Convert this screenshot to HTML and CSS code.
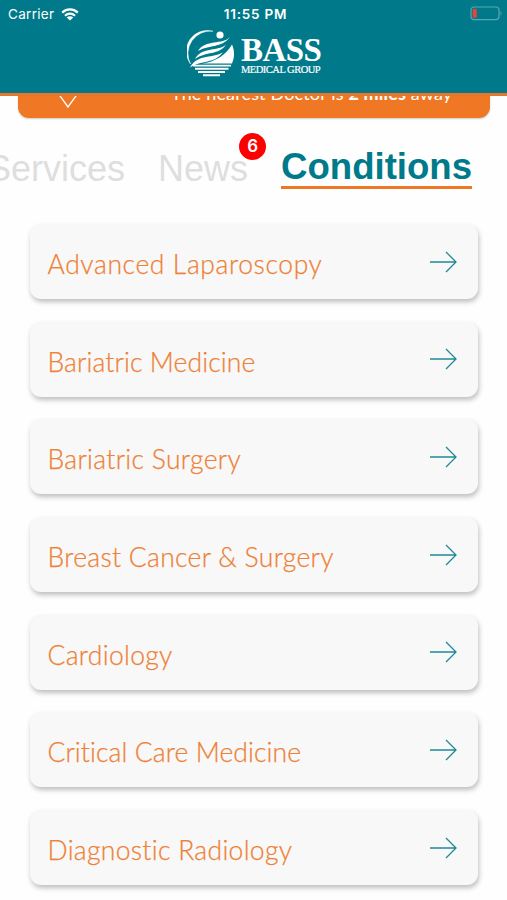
FILE: index.html
```html
<!DOCTYPE html>
<html lang="en">
<head>
  <meta charset="UTF-8">
  <meta name="viewport" content="width=device-width, initial-scale=1.0">
  <title>BASS Medical Group</title>
  <link rel="stylesheet" href="styles.css">
</head>
<body>

  <!-- Header -->
  <header class="header">
    <div class="status">
      <div class="carrier">
        <span>Carrier</span>
        <svg class="wifi" viewBox="0 0 18 13">
          <path d="M1.2 4.6a11.2 11.2 0 0 1 15.6 0M4 7.7a7.2 7.2 0 0 1 10 0" fill="none" stroke="#fff" stroke-width="2.2"/>
          <path d="M9 12.6l-3.2-3a4.6 4.6 0 0 1 6.4 0z" fill="#fff"/>
        </svg>
      </div>
      <span class="time">11:55 PM</span>
      <svg class="battery" viewBox="0 0 33 15">
        <rect x="1" y="1" width="28" height="12.6" rx="3" fill="none" stroke="#5aa5b0" stroke-width="1.2"/>
        <rect x="2.8" y="2.8" width="4" height="9" rx="1.5" fill="#ee4035"/>
        <path d="M30.5 5.2q2.2 2.1 0 4.2z" fill="#5aa5b0"/>
      </svg>
    </div>
    <div class="logo">
      <svg class="emblem" viewBox="0 0 48 48">
        <path d="M26 1.2A22.500 22.500 0 0 0 3.500 34A21 21 0 0 1 26 1.200z" fill="#fff" stroke="#fff" stroke-width="0.500"/>
        <circle cx="33" cy="5" r="3.600" fill="#fff"/>
        <path d="M43 7C36 15 18 9 11 21C22 14.500 34 18.500 43 7z" fill="#fff"/>
        <path d="M39 14.500C32 22 15 16 8 29C19 21 32 25.500 39 14.500z" fill="#fff"/>
        <path d="M36 22C27 29 11 23 3 37.500C14 30 28 34 36 22z" fill="#fff"/>
        <path d="M45 14.500C48 21 47.500 28 45 33.500H15C28 32 39 25 45 14.500z" fill="#fff"/>
        <path d="M6 35.600H44M8 38.800H41.500M11 42H38M16 45.200H33" stroke="#fff" stroke-width="1.900"/>
      </svg>
      <div class="brand">
        <span class="brand-name">BASS</span>
        <span class="brand-sub">MEDICAL GROUP</span>
      </div>
    </div>
  </header>

  <!-- Nearest doctor, scrolled under the header -->
  <div class="banner">
    <svg class="pin" viewBox="0 0 20 26">
      <path d="M10 25L2 14a9 9 0 1 1 16 0z" fill="none" stroke="#fff" stroke-width="1.300"/>
    </svg>
    <p>The nearest Doctor is <b>2 miles</b> away</p>
  </div>

  <nav class="tabs">
    <a class="tab services">Services</a>
    <a class="tab news">News<span class="badge">6</span></a>
    <a class="tab active">Conditions</a>
  </nav>

  <main class="list">
    <a class="card wide"><span>Advanced Laparoscopy</span><svg class="arrow" viewBox="0 0 27 22"><path d="M0 11H26M16 1L26 11L16 21"/></svg></a>
    <a class="card tight"><span>Bariatric Medicine</span><svg class="arrow" viewBox="0 0 27 22"><path d="M0 11H26M16 1L26 11L16 21"/></svg></a>
    <a class="card"><span>Bariatric Surgery</span><svg class="arrow" viewBox="0 0 27 22"><path d="M0 11H26M16 1L26 11L16 21"/></svg></a>
    <a class="card"><span>Breast Cancer &amp; Surgery</span><svg class="arrow" viewBox="0 0 27 22"><path d="M0 11H26M16 1L26 11L16 21"/></svg></a>
    <a class="card"><span>Cardiology</span><svg class="arrow" viewBox="0 0 27 22"><path d="M0 11H26M16 1L26 11L16 21"/></svg></a>
    <a class="card tight"><span>Critical Care Medicine</span><svg class="arrow" viewBox="0 0 27 22"><path d="M0 11H26M16 1L26 11L16 21"/></svg></a>
    <a class="card"><span>Diagnostic Radiology</span><svg class="arrow" viewBox="0 0 27 22"><path d="M0 11H26M16 1L26 11L16 21"/></svg></a>
  </main>

</body>
</html>
```
FILE: styles.css
```css
* {
  box-sizing: border-box;
}

body {
  margin: 0;
  height: 900px;
  background-color: #fefefe;
  font-family: Lato, sans-serif;
  overflow: hidden;
}

.header {
  position: relative;
  z-index: 2;
  height: 96px;
  background-color: #007a8a;
  border-bottom: 3px solid #e5762a;
  color: #fff;
}

.status {
  display: grid;
  grid-template-columns: 1fr auto 1fr;
  align-items: center;
  height: 28px;
  padding: 0 4px 0 8px;
  font-family: Inter, sans-serif;
  font-size: 13.5px;
}

.carrier {
  display: flex;
  align-items: center;
  gap: 7px;
  letter-spacing: 0.3px;
}

.wifi {
  width: 18px;
  height: 13px;
}

.time {
  font-weight: 600;
  font-size: 13.5px;
  letter-spacing: 0.8px;
}

.battery {
  width: 33px;
  height: 15px;
  margin-top: -2px;
  justify-self: end;
}

.logo {
  display: flex;
  gap: 6px;
  padding: 2px 0 0 187px;
}

.emblem {
  width: 48px;
  height: 48px;
}

.brand {
  display: flex;
  flex-direction: column;
  font-family: "Liberation Serif", serif;
  white-space: nowrap;
}

.brand-name {
  margin-top: 7px;
  font-size: 33px;
  font-weight: bold;
  line-height: 27px;
  letter-spacing: -0.6px;
}

.brand-sub {
  font-size: 10.5px;
  line-height: 12px;
  letter-spacing: -0.5px;
  -webkit-text-stroke: 0.2px #fff;
}

.banner {
  display: flex;
  height: 40px;
  margin: -18px 17px 0 18px;
  padding-left: 40px;
  background-color: #f07824;
  border-radius: 0 0 11px 11px;
  box-shadow: 0 1px 2px rgba(0, 0, 0, 0.2);
  color: #fff;
}

.pin {
  width: 20px;
  height: 26px;
  margin-top: 4px;
}

.banner p {
  margin: 4px 0 0 93px;
  font-size: 18px;
  line-height: 22px;
  letter-spacing: 0.15px;
  white-space: nowrap;
}

.tabs {
  display: flex;
  align-items: flex-start;
  height: 106px;
  padding-top: 27px;
  font-family: "Liberation Sans", sans-serif;
}

.tab {
  position: relative;
  margin-top: 3px;
  font-size: 36px;
  line-height: 42px;
  color: #dedede;
}

.services {
  margin-left: -13px;
}

.news {
  margin-left: 33px;
}

.active {
  margin-top: 2px;
  margin-left: 33px;
  border-bottom: 3px solid #f07824;
  font-size: 36.6px;
  font-weight: bold;
  line-height: 39px;
  color: #007a8a;
}

.badge {
  position: absolute;
  top: -15px;
  right: -18px;
  width: 27px;
  height: 27px;
  border-radius: 50%;
  background-color: #fe0000;
  color: #fff;
  font-family: Inter, sans-serif;
  font-size: 17px;
  font-weight: 600;
  line-height: 27px;
  text-align: center;
}

.list {
  display: flex;
  flex-direction: column;
  gap: 22.7px;
  padding: 0 29px 0 30px;
}

.card {
  display: flex;
  flex-shrink: 0;
  justify-content: space-between;
  align-items: center;
  height: 75px;
  padding: 5px 21px 0 17.5px;
  border-radius: 11px;
  background-color: #f8f8f8;
  box-shadow: 1px 3px 5px rgba(0, 0, 0, 0.25);
  color: #ee8136;
  font-size: 26.5px;
  font-weight: 300;
  letter-spacing: 0.3px;
  white-space: nowrap;
  -webkit-text-stroke: 0.25px #ee8136;
}

.wide {
  letter-spacing: 0.6px;
}

.tight {
  letter-spacing: 0.1px;
}

.arrow {
  width: 27px;
  height: 22px;
  margin-bottom: 5px;
  fill: none;
  stroke: #1d8a97;
  stroke-width: 1.3;
}
```
